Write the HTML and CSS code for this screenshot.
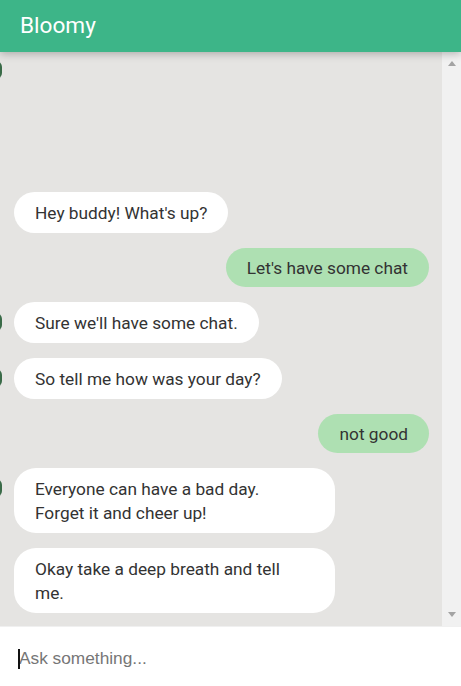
FILE: index.html
```html
<!DOCTYPE html>
<html>
<head>
<meta charset="utf-8">
<link rel="stylesheet" href="styles.css">
</head>
<body>
<div class="app">
  <header class="header"><h1 class="title">Bloomy</h1></header>
  <div class="body">
    <main class="chat">
      <span class="dot top-dot"></span>
      <div class="msg bot">Hey buddy! What's up?</div>
      <div class="msg user">Let's have some chat</div>
      <div class="msg bot avatar">Sure we'll have some chat.</div>
      <div class="msg bot avatar">So tell me how was your day?</div>
      <div class="msg user">not good</div>
      <div class="msg bot avatar long">Everyone can have a bad day. Forget it and cheer up!</div>
      <div class="msg bot long">Okay take a deep breath and tell me.</div>
    </main>
    <div class="scrollbar">
      <span class="arrow up"></span>
      <span class="arrow down"></span>
    </div>
  </div>
  <div class="composer">
    <span class="caret"></span>
    <input class="input" type="text" placeholder="Ask something...">
  </div>
</div>
</body>
</html>
```
FILE: styles.css
```css
html, body {
  margin: 0;
  padding: 0;
  height: 100%;
}
.app {
  display: flex;
  flex-direction: column;
  height: 686px;
  width: 461px;
  overflow: hidden;
}
.header {
  height: 52px;
  flex: none;
  background: #3db588;
  box-shadow: 0 2px 8px rgba(0,0,0,0.25);
  position: relative;
  z-index: 2;
  display: flex;
  align-items: center;
}
.title {
  margin: 0 0 1px 20px;
  font-family: Roboto, "Noto Sans", sans-serif;
  font-weight: 400;
  font-size: 22.6px;
  color: #fff;
}
.body {
  flex: 1;
  display: flex;
  min-height: 0;
}
.chat {
  flex: 1;
  background: #e5e4e2;
  display: flex;
  flex-direction: column;
  justify-content: flex-end;
  gap: 15px;
  padding: 0 13px 13px 14px;
  position: relative;
}
.scrollbar {
  width: 19px;
  flex: none;
  background: #f1f1f1;
  display: flex;
  flex-direction: column;
  justify-content: space-between;
  align-items: center;
  padding: 9px 0 9px;
  box-sizing: border-box;
}
.arrow {
  width: 0;
  height: 0;
  border-left: 4.5px solid transparent;
  border-right: 4.5px solid transparent;
}
.arrow.up {
  border-bottom: 5px solid #a3a3a3;
}
.arrow.down {
  border-top: 5px solid #a3a3a3;
}
.msg {
  font-family: Roboto, "Noto Sans", sans-serif;
  font-size: 17.3px;
  line-height: 24px;
  color: #333;
  padding: 8.5px 21px;
  border-radius: 22px;
  max-width: 321px;
  box-sizing: border-box;
  position: relative;
}
.bot {
  align-self: flex-start;
  background: #fff;
}
.long {
  width: 321px;
  padding-right: 45px;
}
.user {
  align-self: flex-end;
  background: #aee0b2;
  padding: 7.5px 21px;
}
.avatar::before,
.dot {
  content: "";
  position: absolute;
  left: -24.5px;
  top: 11px;
  width: 12px;
  height: 18px;
  border-radius: 6px;
  background: #3a6b48;
}
.top-dot {
  left: -10.5px;
  top: 9px;
}
.composer {
  height: 60px;
  flex: none;
  background: #fff;
  border-top: 1px solid #f0f0f0;
  box-sizing: border-box;
  display: flex;
  align-items: center;
  padding-top: 4px;
  position: relative;
}
.caret {
  position: absolute;
  left: 18px;
  top: 22px;
  width: 2px;
  height: 20px;
  background: #111;
}
.input {
  border: none;
  outline: none;
  width: 100%;
  padding: 0 0 0 19px;
  font-family: "Liberation Sans", Arial, sans-serif;
  font-size: 17.3px;
  color: #333;
  background: transparent;
}
.input::placeholder {
  color: #767676;
}
```
